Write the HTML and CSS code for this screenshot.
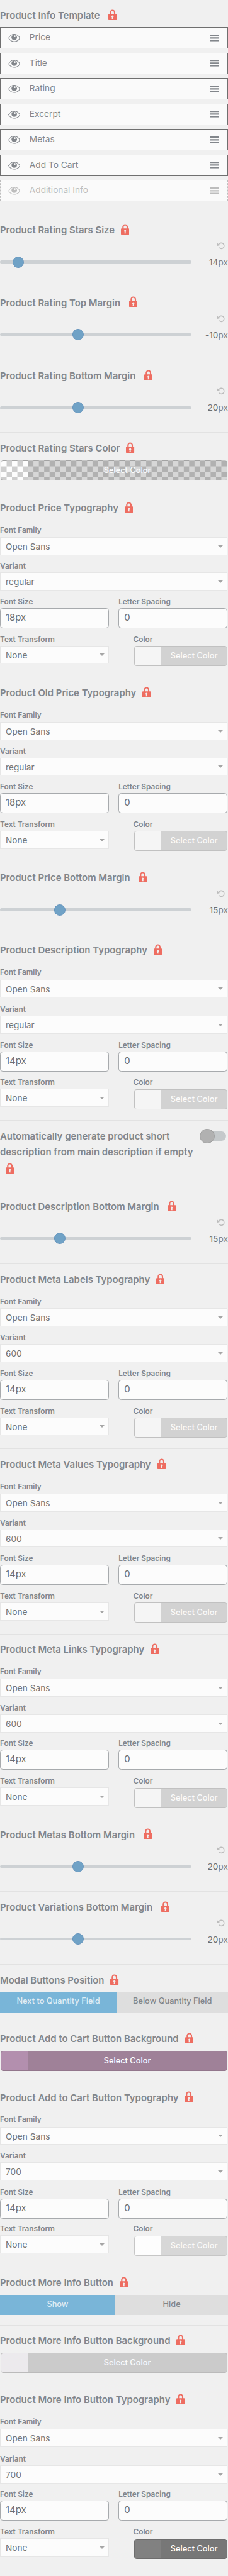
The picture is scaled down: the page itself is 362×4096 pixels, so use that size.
FILE: index.html
```html
<!DOCTYPE html>
<html lang="en">
<head>
<meta charset="utf-8">
<title>Product Settings</title>
<link rel="stylesheet" href="styles.css">
</head>
<body>
<svg class="sprite" aria-hidden="true">
  <symbol id="lock" viewBox="0 0 25 32"><path d="M6.2 15V9a6.3 6.3 0 0 1 12.600 0v6" fill="none" stroke="#ee6d61" stroke-width="4"/><rect y="13.500" width="25" height="18.500" rx="2" fill="#ee6d61"/><circle cx="12.500" cy="21" r="3" fill="#f0f0f0"/><path d="M11.300 22h2.400l1 6.500h-4.400z" fill="#f0f0f0"/></symbol>
  <symbol id="eye" viewBox="0 0 36 24"><path d="M1 12.200C10-2.800 26-2.800 35 12.200 26 26.400 10 26.400 1 12.200z" fill="none" stroke="currentColor" stroke-width="2"/><circle cx="18" cy="10.300" r="8.200" fill="currentColor"/><circle cx="19.700" cy="7" r="2.600" fill="#fafafa"/></symbol>
  <symbol id="bars" viewBox="0 0 28 20"><path d="M0 0h28v4H0zM0 8h28v4H0zM0 16h28v4H0z" fill="currentColor"/></symbol>
  <symbol id="reset" viewBox="0 0 22 22"><path d="M5 6.200A8.500 8.500 0 1 1 5.600 16.600" fill="none" stroke="#bdbdbd" stroke-width="3"/><path d="M0 3v8.200l7.600-2z" fill="#bdbdbd"/></symbol>
</svg>
<main class="panel">
  <section class="control template">
    <h3 class="title spaced">Product Info Template<svg class="lock"><use href="#lock"/></svg></h3>
    <ul class="parts">
      <li class="part"><svg class="eye"><use href="#eye"/></svg><span>Price</span><svg class="bars"><use href="#bars"/></svg></li>
      <li class="part"><svg class="eye"><use href="#eye"/></svg><span>Title</span><svg class="bars"><use href="#bars"/></svg></li>
      <li class="part"><svg class="eye"><use href="#eye"/></svg><span>Rating</span><svg class="bars"><use href="#bars"/></svg></li>
      <li class="part"><svg class="eye"><use href="#eye"/></svg><span>Excerpt</span><svg class="bars"><use href="#bars"/></svg></li>
      <li class="part"><svg class="eye"><use href="#eye"/></svg><span>Metas</span><svg class="bars"><use href="#bars"/></svg></li>
      <li class="part"><svg class="eye"><use href="#eye"/></svg><span>Add To Cart</span><svg class="bars"><use href="#bars"/></svg></li>
      <li class="part off"><svg class="eye"><use href="#eye"/></svg><span>Additional Info</span><svg class="bars"><use href="#bars"/></svg></li>
    </ul>
  </section>

  <section class="control range compact">
    <h3 class="title">Product Rating Stars Size<svg class="lock"><use href="#lock"/></svg></h3>
    <svg class="reset"><use href="#reset"/></svg>
    <div class="slider"><div class="track"><i class="knob at-14"></i></div><p class="value"><b>14</b>px</p></div>
  </section>

  <section class="control range tall">
    <h3 class="title spaced">Product Rating Top Margin<svg class="lock"><use href="#lock"/></svg></h3>
    <svg class="reset"><use href="#reset"/></svg>
    <div class="slider"><div class="track"><i class="knob at-20"></i></div><p class="value"><b>-10</b>px</p></div>
  </section>

  <section class="control range">
    <h3 class="title spaced">Product Rating Bottom Margin<svg class="lock"><use href="#lock"/></svg></h3>
    <svg class="reset"><use href="#reset"/></svg>
    <div class="slider"><div class="track"><i class="knob at-20"></i></div><p class="value"><b>20</b>px</p></div>
  </section>

  <section class="control paint stars">
    <h3 class="title">Product Rating Stars Color<svg class="lock"><use href="#lock"/></svg></h3>
    <div class="picker clear"><span class="swatch"></span><span class="pick">Select Color</span></div>
  </section>

  <section class="control typo">
    <h3 class="title">Product Price Typography<svg class="lock"><use href="#lock"/></svg></h3>
    <div class="field family"><label>Font Family</label><div class="select">Open Sans</div></div>
    <div class="field variant"><label>Variant</label><div class="select">regular</div></div>
    <div class="pair sizes">
      <div class="field"><label>Font Size</label><div class="input">18px</div></div>
      <div class="field"><label>Letter Spacing</label><div class="input">0</div></div>
    </div>
    <div class="pair looks">
      <div class="field"><label>Text Transform</label><div class="select">None</div></div>
      <div class="field tint"><label>Color</label><div class="picker"><span class="swatch"></span><span class="pick">Select Color</span></div></div>
    </div>
  </section>

  <section class="control typo">
    <h3 class="title">Product Old Price Typography<svg class="lock"><use href="#lock"/></svg></h3>
    <div class="field family"><label>Font Family</label><div class="select">Open Sans</div></div>
    <div class="field variant"><label>Variant</label><div class="select">regular</div></div>
    <div class="pair sizes">
      <div class="field"><label>Font Size</label><div class="input">18px</div></div>
      <div class="field"><label>Letter Spacing</label><div class="input">0</div></div>
    </div>
    <div class="pair looks">
      <div class="field"><label>Text Transform</label><div class="select">None</div></div>
      <div class="field tint"><label>Color</label><div class="picker"><span class="swatch"></span><span class="pick">Select Color</span></div></div>
    </div>
  </section>

  <section class="control range">
    <h3 class="title spaced">Product Price Bottom Margin<svg class="lock"><use href="#lock"/></svg></h3>
    <svg class="reset"><use href="#reset"/></svg>
    <div class="slider"><div class="track"><i class="knob at-15"></i></div><p class="value"><b>15</b>px</p></div>
  </section>

  <section class="control typo roomy">
    <h3 class="title">Product Description Typography<svg class="lock"><use href="#lock"/></svg></h3>
    <div class="field family"><label>Font Family</label><div class="select">Open Sans</div></div>
    <div class="field variant"><label>Variant</label><div class="select">regular</div></div>
    <div class="pair sizes">
      <div class="field"><label>Font Size</label><div class="input">14px</div></div>
      <div class="field"><label>Letter Spacing</label><div class="input">0</div></div>
    </div>
    <div class="pair looks">
      <div class="field"><label>Text Transform</label><div class="select">None</div></div>
      <div class="field tint"><label>Color</label><div class="picker"><span class="swatch"></span><span class="pick">Select Color</span></div></div>
    </div>
  </section>

  <section class="control auto">
    <h3 class="title">Automatically generate product short<br>description from main description if empty<br><svg class="lock"><use href="#lock"/></svg></h3>
    <div class="switch"><i class="thumb"></i></div>
  </section>

  <section class="control range tall">
    <h3 class="title spaced">Product Description Bottom Margin<svg class="lock"><use href="#lock"/></svg></h3>
    <svg class="reset"><use href="#reset"/></svg>
    <div class="slider"><div class="track"><i class="knob at-15"></i></div><p class="value"><b>15</b>px</p></div>
  </section>

  <section class="control typo">
    <h3 class="title">Product Meta Labels Typography<svg class="lock"><use href="#lock"/></svg></h3>
    <div class="field family snug"><label>Font Family</label><div class="select">Open Sans</div></div>
    <div class="field variant"><label>Variant</label><div class="select">600</div></div>
    <div class="pair sizes">
      <div class="field"><label>Font Size</label><div class="input">14px</div></div>
      <div class="field"><label>Letter Spacing</label><div class="input">0</div></div>
    </div>
    <div class="pair looks">
      <div class="field"><label>Text Transform</label><div class="select">None</div></div>
      <div class="field tint"><label>Color</label><div class="picker"><span class="swatch"></span><span class="pick">Select Color</span></div></div>
    </div>
  </section>

  <section class="control typo">
    <h3 class="title">Product Meta Values Typography<svg class="lock"><use href="#lock"/></svg></h3>
    <div class="field family"><label>Font Family</label><div class="select">Open Sans</div></div>
    <div class="field variant"><label>Variant</label><div class="select">600</div></div>
    <div class="pair sizes">
      <div class="field"><label>Font Size</label><div class="input">14px</div></div>
      <div class="field"><label>Letter Spacing</label><div class="input">0</div></div>
    </div>
    <div class="pair looks">
      <div class="field"><label>Text Transform</label><div class="select">None</div></div>
      <div class="field tint"><label>Color</label><div class="picker"><span class="swatch"></span><span class="pick">Select Color</span></div></div>
    </div>
  </section>

  <section class="control typo">
    <h3 class="title">Product Meta Links Typography<svg class="lock"><use href="#lock"/></svg></h3>
    <div class="field family"><label>Font Family</label><div class="select">Open Sans</div></div>
    <div class="field variant"><label>Variant</label><div class="select">600</div></div>
    <div class="pair sizes">
      <div class="field"><label>Font Size</label><div class="input">14px</div></div>
      <div class="field"><label>Letter Spacing</label><div class="input">0</div></div>
    </div>
    <div class="pair looks">
      <div class="field"><label>Text Transform</label><div class="select">None</div></div>
      <div class="field tint"><label>Color</label><div class="picker"><span class="swatch"></span><span class="pick">Select Color</span></div></div>
    </div>
  </section>

  <section class="control range">
    <h3 class="title spaced">Product Metas Bottom Margin<svg class="lock"><use href="#lock"/></svg></h3>
    <svg class="reset"><use href="#reset"/></svg>
    <div class="slider"><div class="track"><i class="knob at-20"></i></div><p class="value"><b>20</b>px</p></div>
  </section>

  <section class="control range tall">
    <h3 class="title spaced">Product Variations Bottom Margin<svg class="lock"><use href="#lock"/></svg></h3>
    <svg class="reset"><use href="#reset"/></svg>
    <div class="slider"><div class="track"><i class="knob at-20"></i></div><p class="value"><b>20</b>px</p></div>
  </section>

  <section class="control choice position">
    <h3 class="title">Modal Buttons Position<svg class="lock"><use href="#lock"/></svg></h3>
    <div class="options"><span class="option on">Next to Quantity Field</span><span class="option">Below Quantity Field</span></div>
  </section>

  <section class="control paint">
    <h3 class="title">Product Add to Cart Button Background<svg class="lock"><use href="#lock"/></svg></h3>
    <div class="picker plum"><span class="swatch"></span><span class="pick">Select Color</span></div>
  </section>

  <section class="control typo cart">
    <h3 class="title">Product Add to Cart Button Typography<svg class="lock"><use href="#lock"/></svg></h3>
    <div class="field family"><label>Font Family</label><div class="select">Open Sans</div></div>
    <div class="field variant"><label>Variant</label><div class="select">700</div></div>
    <div class="pair sizes">
      <div class="field"><label>Font Size</label><div class="input">14px</div></div>
      <div class="field"><label>Letter Spacing</label><div class="input">0</div></div>
    </div>
    <div class="pair looks">
      <div class="field"><label>Text Transform</label><div class="select">None</div></div>
      <div class="field tint"><label>Color</label><div class="picker white"><span class="swatch"></span><span class="pick">Select Color</span></div></div>
    </div>
  </section>

  <section class="control choice">
    <h3 class="title">Product More Info Button<svg class="lock"><use href="#lock"/></svg></h3>
    <div class="options"><span class="option on">Show</span><span class="option">Hide</span></div>
  </section>

  <section class="control paint">
    <h3 class="title">Product More Info Button Background<svg class="lock"><use href="#lock"/></svg></h3>
    <div class="picker silver"><span class="swatch"></span><span class="pick">Select Color</span></div>
  </section>

  <section class="control typo roomy last">
    <h3 class="title">Product More Info Button Typography<svg class="lock"><use href="#lock"/></svg></h3>
    <div class="field family"><label>Font Family</label><div class="select">Open Sans</div></div>
    <div class="field variant"><label>Variant</label><div class="select">700</div></div>
    <div class="pair sizes">
      <div class="field"><label>Font Size</label><div class="input">14px</div></div>
      <div class="field"><label>Letter Spacing</label><div class="input">0</div></div>
    </div>
    <div class="pair looks">
      <div class="field"><label>Text Transform</label><div class="select">None</div></div>
      <div class="field tint"><label>Color</label><div class="picker dark"><span class="swatch"></span><span class="pick">Select Color</span></div></div>
    </div>
  </section>
</main>
</body>
</html>
```
FILE: styles.css
```css
/* All lengths are in rem so the whole panel scales from this one size. */
html { font-size: 5.3306px; background: #f0f0f0; }
* { box-sizing: border-box; margin: 0; padding: 0; }
body { font-family: Inter, "Liberation Sans", sans-serif; color: #82868b; font-size: 2.57rem; overflow: hidden; height: 768.4rem; }
.sprite { position: absolute; width: 0; height: 0; }
.panel { width: 68rem; margin-top: -0.1rem; }

.control { position: relative; padding-top: 2.6rem; box-shadow: inset 0 1px #e2e2e2; }
.title { font-size: 2.8rem; font-weight: 600; line-height: 4.8rem; white-space: nowrap; display: flex; align-items: center; }
.lock { width: 2.5rem; height: 3.2rem; flex: none; margin: -0.9rem 0 0 1.85rem; }
.spaced .lock { margin-left: 2.6rem; }

.template { height: 64.4rem; }
.parts { list-style: none; display: grid; gap: 1.2rem; padding-top: 0.8rem; }
.part { height: 6.4rem; border: 1px solid #6f6f6f; background: #fafafa; display: flex; align-items: center; padding: 0 2.6rem 0 2.2rem; }
.part span { flex: 1; padding: 0 0 0.1rem 2.8rem; line-height: 3.2rem; }
.eye { width: 3.6rem; height: 2.4rem; margin-top: 0.2rem; }
.bars { width: 2.8rem; height: 2rem; }
.off { border-style: dashed; border-color: #bdbdbd; color: #bdbdbd; }

.range { height: 21.6rem; }
.tall { height: 21.8rem; }
.compact { height: 21.2rem; padding-top: 2.2rem; }
.reset { display: block; width: 2.2rem; height: 2.2rem; margin: 0.9rem 1rem 0 auto; }
.tall .reset { margin-top: 1.1rem; margin-bottom: -0.2rem; }
.slider { display: flex; align-items: center; justify-content: space-between; height: 3.6rem; margin-top: 2rem; }
.track { position: relative; width: 57.1rem; height: 0.9rem; border-radius: 0.5rem; background: #cdd1d4; }
.knob { position: absolute; top: -1.25rem; width: 3.4rem; height: 3.4rem; border-radius: 50%; background: #70a2c6; border: 1px solid #6594bd; transform: translateX(-50%); }
.at-14 { left: 5.4rem; }
.at-15 { left: 17.8rem; }
.at-20 { left: 23.2rem; }
.value { padding-right: 0.1rem; }
.value b { font-weight: 400; color: #6b6e72; }
.tall .value { padding-top: 0.4rem; }

.picker { display: flex; height: 6rem; border-radius: 0.8rem; overflow: hidden; border: 1px solid rgba(0, 0, 0, 0.08); background: #d2d2d2; color: #fbfbfb; font-size: 2.4rem; font-weight: 500; line-height: 5.6rem; }
.swatch { width: 8rem; background: #f5f5f5; flex: none; }
.pick { flex: 1; text-align: center; }
.paint { height: 17.6rem; }
.paint .picker { margin: 1rem 0.3rem 0 0.1rem; }
.stars { height: 17.8rem; }
.stars .picker { margin-top: 1.1rem; }
.clear { background: repeating-conic-gradient(#d7d7d7 0 25%, #b1b1b1 0 50%) 1.6rem 0 / 3.2rem 3.2rem; }
.clear .swatch { background: repeating-conic-gradient(#cecece 0 25%, #fdfdfd 0 50%) 0 0 / 3.2rem 3.2rem; }
.plum { background: #9f8198; color: #fff; }
.plum .swatch { background: #b38fae; }
.silver { background: #cbcbcb; }
.silver .swatch { background: #eceaed; }
.white { background: #d7d7d7; }
.white .swatch { background: #fdfdfd; }
.dark { background: #777; color: #fff; }
.dark .swatch { background: #818181; }

.typo { height: 55.2rem; }
.field label { display: block; font-size: 2.22rem; font-weight: 600; line-height: 2.8rem; margin-bottom: 0.4rem; white-space: nowrap; }
.select { position: relative; height: 5.4rem; border: 1px solid #e6e6e6; background: #fcfcfc; color: #757575; line-height: 5.6rem; padding-left: 1.5rem; }
.select::after { content: ""; position: absolute; right: 1.2rem; top: 2.2rem; border: 0.8rem solid transparent; border-top: 0.9rem solid #a6a6a6; border-bottom: 0; }
.input { height: 6rem; border: 1px solid #a7aaad; border-radius: 0.8rem; background: #fcfcfc; color: #6b6e72; font-size: 2.8rem; line-height: 5.6rem; padding-left: 1.5rem; }
.family { margin-top: 2.7rem; margin-right: 0.2rem; }
.family label { margin-bottom: 0.6rem; }
.snug label { margin-bottom: 0.4rem; }
.snug { margin-bottom: 0.2rem; }
.variant { margin-top: 2rem; margin-right: 0.2rem; }
.snug + .variant { margin-top: 2.2rem; }
.pair { display: grid; grid-template-columns: 32.5rem 32.5rem; column-gap: 2.8rem; width: 67.8rem; }
.sizes { margin-top: 2rem; }
.looks { margin-top: 2rem; }
.tint { padding-left: 4.4rem; }
.tint label { margin-bottom: 0.5rem; }
.tint .picker { margin: 0 0.1rem 0 0.2rem; }
.roomy { height: 55.4rem; }
.roomy .variant { margin-top: 2.2rem; }
.cart .sizes { margin-top: 2.2rem; }
.cart .looks { margin-top: 1.8rem; }
.last { height: 57.3rem; }

.auto { height: 21rem; display: flex; justify-content: space-between; align-items: flex-start; }
.auto .title { display: block; }
.auto .lock { display: block; margin: 0.6rem 0 0 1.7rem; }
.switch { position: relative; width: 7.2rem; height: 2.8rem; margin: 0.8rem 0.7rem 0 0; border-radius: 1.4rem; background: #c5c9cb; }
.thumb { position: absolute; left: -0.6rem; top: -0.8rem; width: 4.4rem; height: 4.4rem; border-radius: 50%; background: #b1b1b1; border: 1px solid #9e9e9e; }

.choice { height: 17.4rem; }
.options { display: flex; height: 6rem; margin-top: 1rem; background: #dedede; font-size: 2.4rem; font-weight: 500; line-height: 5.8rem; text-align: center; }
.option { flex: 1; white-space: nowrap; }
.on { flex: none; width: 34.3rem; background: #79b5d8; color: #e0edf5; }
.position .options { height: 6.2rem; margin-top: 0.8rem; }
.position .on { width: 34.7rem; }
```
